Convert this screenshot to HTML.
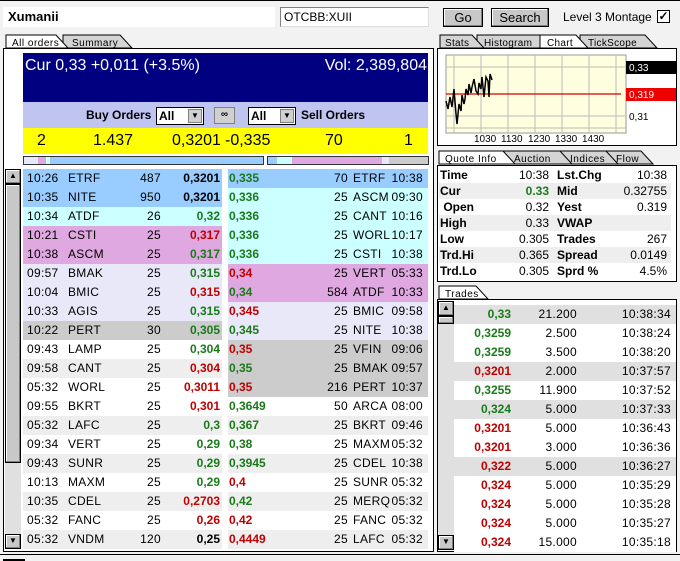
<!DOCTYPE html>
<html><head><meta charset="utf-8"><style>
*{margin:0;padding:0;box-sizing:border-box}
body{width:680px;height:561px;background:#f2f2f2;font-family:"Liberation Sans",Arial,sans-serif;position:relative;overflow:hidden;color:#000}
.a{position:absolute}
.r{position:absolute;height:19px;font-size:12px;line-height:19px;white-space:nowrap;letter-spacing:0.3px}
.r span{position:absolute}
.g{color:#1a7a1a;font-weight:bold;letter-spacing:0}
.d{color:#c00000;font-weight:bold;letter-spacing:0}
.k{color:#000;font-weight:bold;letter-spacing:0}
.btn{position:absolute;background:#c8c8c8;border:1px solid #000;box-shadow:inset -1px -1px #808080,inset 1px 1px #fff;font-size:13px;text-align:center;line-height:17px}
.q{position:absolute;left:439px;width:232px;height:16px;font-size:12px;line-height:16px}
.q span{position:absolute}
.q b{font-weight:bold}
svg text{font-family:"Liberation Sans",Arial,sans-serif}
</style></head><body>
<div class="a" style="left:0;top:0;width:680px;height:1px;background:#000"></div>
<div class="a" style="left:3px;top:7px;width:272px;height:20px;background:#fff;font-weight:bold;font-size:13px;line-height:20px;padding-left:5px">Xumanii</div>
<div class="a" style="left:280px;top:7px;width:149px;height:20px;background:#fff;border:1px solid #808080;border-right-color:#ddd;border-bottom-color:#ddd;font-size:12px;line-height:18px;padding-left:3px">OTCBB:XUII</div>
<div class="btn" style="left:443px;top:8px;width:40px;height:19px">Go</div>
<div class="btn" style="left:491px;top:8px;width:58px;height:19px">Search</div>
<div class="a" style="left:563px;top:8px;font-size:12px;line-height:18px">Level 3 Montage</div>
<div class="a" style="left:657px;top:10px;width:13px;height:13px;background:#fff;border:1px solid #000;font-size:12px;line-height:11px;text-align:center;font-weight:bold">✓</div>

<svg class="a" style="left:0;top:33px" width="440" height="16">
<polygon points="63,2 120,2 132,15 63,15" fill="#d4d4d4" stroke="#000"/>
<polygon points="6,2 56,2 68,15 6,15" fill="#fff" stroke="#000"/>
<text x="12" y="13" font-size="10" letter-spacing="0.5">All orders</text>
<text x="72" y="13" font-size="10" letter-spacing="0.5">Summary</text>
</svg>
<svg class="a" style="left:436px;top:33px" width="244" height="16">
<polygon points="144,2 209,2 221,15 144,15" fill="#d4d4d4" stroke="#000"/>
<polygon points="41,2 104,2 116,15 41,15" fill="#d4d4d4" stroke="#000"/>
<polygon points="4,2 36,2 48,15 4,15" fill="#d4d4d4" stroke="#000"/>
<polygon points="104,2 140,2 152,15 104,15" fill="#fff" stroke="#000"/>
<text x="9" y="13" font-size="10" letter-spacing="0.3">Stats</text>
<text x="48" y="13" font-size="10" letter-spacing="0.3">Histogram</text>
<text x="111" y="13" font-size="10" letter-spacing="0.3">Chart</text>
<text x="152" y="13" font-size="10" letter-spacing="0.3">TickScope</text>
</svg>

<div class="a" style="left:3px;top:48px;width:431px;height:504px;border:1px solid #000;background:#fff"></div>
<div class="a" style="left:23px;top:53px;width:405px;height:49px;background:#000080;color:#fff;font-size:16px;line-height:26px">
<span style="position:absolute;left:2px">Cur 0,33 +0,011 (+3.5%)</span><span style="position:absolute;right:1px">Vol: 2,389,804</span></div>
<div class="a" style="left:23px;top:102px;width:405px;height:26px;background:#c0c4f0;font-size:12px;font-weight:bold;line-height:26px">
<span style="position:absolute;left:63px">Buy Orders</span>
<div style="position:absolute;left:133px;top:5px;width:48px;height:18px;background:#fff;border:1px solid #000;font-size:12px;line-height:16px;padding-left:2px">All<div style="position:absolute;right:1px;top:1px;width:14px;height:14px;background:#d0d0d0;border:1px solid #808080;font-size:8px;line-height:12px;text-align:center">▼</div></div>
<div style="position:absolute;left:191px;top:5px;width:21px;height:17px;background:#d0d0d0;border:1px solid #808080;font-size:10px;line-height:14px;text-align:center">∞</div>
<div style="position:absolute;left:225px;top:5px;width:48px;height:18px;background:#fff;border:1px solid #000;font-size:12px;line-height:16px;padding-left:2px">All<div style="position:absolute;right:1px;top:1px;width:14px;height:14px;background:#d0d0d0;border:1px solid #808080;font-size:8px;line-height:12px;text-align:center">▼</div></div>
<span style="position:absolute;left:278px">Sell Orders</span></div>
<div class="a" style="left:23px;top:128px;width:405px;height:26px;background:#ffff00;font-size:16px;line-height:26px">
<span style="position:absolute;left:14px">2</span><span style="position:absolute;left:70px">1.437</span><span style="position:absolute;left:149px">0,3201</span><span style="position:absolute;left:202px">-0,335</span><span style="position:absolute;left:302px">70</span><span style="position:absolute;left:381px">1</span></div>
<div class="a" style="left:23px;top:156px;width:241px;height:9px;border:1px solid #333;background:#99ccff"><div style="position:absolute;left:0;width:14px;height:7px;background:#e8e8f8"></div><div style="position:absolute;left:14px;width:8px;height:7px;background:#e0a8e0"></div><div style="position:absolute;left:22px;width:4px;height:7px;background:#ccffff"></div></div>
<div class="a" style="left:267px;top:156px;width:162px;height:9px;border:1px solid #333;background:#e0a8e0"><div style="position:absolute;left:0;width:9px;height:7px;background:#99ccff"></div><div style="position:absolute;left:9px;width:15px;height:7px;background:#ccffff"></div><div style="position:absolute;left:114px;width:7px;height:7px;background:#e8e8f8"></div><div style="position:absolute;left:121px;width:39px;height:7px;background:#cccccc"></div></div>
<div class="a" style="left:5px;top:169px;width:16px;height:380px;background:#e0e0e0"></div>
<div class="btn" style="left:5px;top:169px;width:16px;height:15px;font-size:8px;line-height:12px">▲</div>
<div class="btn" style="left:5px;top:184px;width:16px;height:279px"></div>
<div class="btn" style="left:5px;top:534px;width:16px;height:15px;font-size:8px;line-height:12px">▼</div>

<div id="rows"></div>

<div class="a" style="left:437px;top:48px;width:240px;height:98px;border:1px solid #000;background:#fff"></div>
<svg class="a" style="left:438px;top:49px" width="238" height="96">
<rect x="8" y="6" width="180" height="78" fill="#ffffe0" stroke="#999"/>
<g stroke="#bbb" stroke-width="1">
<line x1="16" y1="6" x2="16" y2="84"/><line x1="43" y1="6" x2="43" y2="84"/><line x1="70" y1="6" x2="70" y2="84"/><line x1="97" y1="6" x2="97" y2="84"/><line x1="124" y1="6" x2="124" y2="84"/><line x1="151" y1="6" x2="151" y2="84"/><line x1="178" y1="6" x2="178" y2="84"/>
<line x1="8" y1="18" x2="188" y2="18"/><line x1="8" y1="67" x2="188" y2="67"/><line x1="8" y1="79" x2="188" y2="79"/>
</g>
<line x1="8" y1="45" x2="183" y2="45" stroke="#c00" stroke-width="1.2"/>
<polyline points="8,52 10,60 12,48 14,58 16,40 18,65 19,75 21,55 23,62 24,46 26,55 27,50 28,40 30,46 31,35 33,44 34,38 36,30 38,42 40,45 41,34 43,40 44,28 46,48 48,28 50,32 51,48 52,25 54,31" fill="none" stroke="#000" stroke-width="1.5"/>
<rect x="188" y="12" width="50" height="13" fill="#000"/><text x="191" y="22" font-size="10" fill="#fff">0,33</text>
<rect x="188" y="39" width="50" height="13" fill="#e00"/><text x="191" y="49" font-size="10" fill="#fff">0,319</text>
<text x="191" y="71" font-size="10">0,31</text>
<text x="36" y="93" font-size="10">1030</text><text x="63" y="93" font-size="10">1130</text><text x="90" y="93" font-size="10">1230</text><text x="117" y="93" font-size="10">1330</text><text x="144" y="93" font-size="10">1430</text>
</svg>

<svg class="a" style="left:436px;top:149px" width="244" height="16">
<polygon points="170,2 205,2 217,15 170,15" fill="#d4d4d4" stroke="#000"/>
<polygon points="124,2 170,2 182,15 124,15" fill="#d4d4d4" stroke="#000"/>
<polygon points="67,2 124,2 136,15 67,15" fill="#d4d4d4" stroke="#000"/>
<polygon points="3,2 67,2 79,15 3,15" fill="#fff" stroke="#000"/>
<text x="9" y="13" font-size="10" letter-spacing="0.5">Quote Info</text>
<text x="78" y="13" font-size="10" letter-spacing="0.5">Auction</text>
<text x="134" y="13" font-size="10" letter-spacing="0.5">Indices</text>
<text x="180" y="13" font-size="10" letter-spacing="0.5">Flow</text>
</svg>
<div class="a" style="left:437px;top:165px;width:240px;height:117px;border:1px solid #000;background:#fff"></div>
<div id="q"></div>

<svg class="a" style="left:436px;top:284px" width="100" height="16">
<polygon points="3,2 40,2 52,15 3,15" fill="#fff" stroke="#000"/>
<text x="9" y="13" font-size="10" letter-spacing="0.5">Trades</text>
</svg>
<div class="a" style="left:437px;top:299px;width:240px;height:253px;border:1px solid #000;background:#fff"></div>
<div class="a" style="left:438px;top:301px;width:16px;height:249px;background:#e0e0e0"></div>
<div class="btn" style="left:438px;top:301px;width:16px;height:15px;font-size:8px;line-height:12px">▲</div>
<div class="btn" style="left:438px;top:316px;width:16px;height:8px"></div>
<div class="btn" style="left:438px;top:535px;width:16px;height:15px;font-size:8px;line-height:12px">▼</div>
<div id="t"></div>

<div class="a" style="left:0;top:554px;width:680px;height:1px;background:#000"></div>
<div class="a" style="left:3px;top:559px;width:22px;height:2px;background:#000"></div>

<script>
var B="#99ccff",C="#ccffff",P="#e0a8e0",L="#e8e8f8",G="#cccccc",W="#ffffff",E="#eeeeee";
var buy=[["10:26","ETRF","487","0,3201","k",B],["10:35","NITE","950","0,3201","k",B],["10:34","ATDF","26","0,32","g",C],["10:21","CSTI","25","0,317","d",P],["10:38","ASCM","25","0,317","g",P],["09:57","BMAK","25","0,315","g",L],["10:04","BMIC","25","0,315","d",L],["10:33","AGIS","25","0,315","g",L],["10:22","PERT","30","0,305","g",G],["09:43","LAMP","25","0,304","g",W],["09:58","CANT","25","0,304","d",E],["05:32","WORL","25","0,3011","d",W],["09:55","BKRT","25","0,301","d",W],["05:32","LAFC","25","0,3","g",E],["09:34","VERT","25","0,29","g",W],["09:43","SUNR","25","0,29","g",E],["10:13","MAXM","25","0,29","g",W],["10:35","CDEL","25","0,2703","d",E],["05:32","FANC","25","0,26","d",W],["05:32","VNDM","120","0,25","k",E]];
var sell=[["0,335","g","70","ETRF","10:38",B],["0,336","g","25","ASCM","09:30",C],["0,336","g","25","CANT","10:16",C],["0,336","g","25","WORL","10:17",C],["0,336","g","25","CSTI","10:38",C],["0,34","d","25","VERT","05:33",P],["0,34","g","584","ATDF","10:33",P],["0,345","d","25","BMIC","09:58",L],["0,345","g","25","NITE","10:38",L],["0,35","d","25","VFIN","09:06",G],["0,35","g","25","BMAK","09:57",G],["0,35","d","216","PERT","10:37",G],["0,3649","g","50","ARCA","08:00",W],["0,367","g","25","BKRT","09:46",E],["0,38","g","25","MAXM","05:32",W],["0,3945","g","25","CDEL","10:38",E],["0,4","d","25","SUNR","05:32",W],["0,42","g","25","MERQ","05:32",E],["0,42","d","25","FANC","05:32",W],["0,4449","d","25","LAFC","05:32",E]];
var h="";
for(var i=0;i<20;i++){var y=169+i*19,b=buy[i],s=sell[i];
h+='<div class="r" style="left:23px;top:'+y+'px;width:199px;background:'+b[5]+'"><span style="left:4px">'+b[0]+'</span><span style="left:45px">'+b[1]+'</span><span style="right:61px">'+b[2]+'</span><span class="'+b[4]+'" style="right:2px">'+b[3]+'</span></div>';
h+='<div class="r" style="left:228px;top:'+y+'px;width:200px;background:'+s[5]+'"><span class="'+s[1]+'" style="left:1px">'+s[0]+'</span><span style="right:80px">'+s[2]+'</span><span style="left:125px">'+s[3]+'</span><span style="right:5px">'+s[4]+'</span></div>';}
document.getElementById("rows").innerHTML=h;
var q=[["Time","10:38","Lst.Chg","10:38",W],["Cur","0.33","Mid","0.32755",E],[" Open","0.32","Yest","0.319",W],["High","0.33","VWAP","",E],["Low","0.305","Trades","267",W],["Trd.Hi","0.365","Spread","0.0149",E],["Trd.Lo","0.305","Sprd %","4.5%",W]];
h="";for(i=0;i<7;i++){var r=q[i];h+='<div class="q" style="top:'+(167+i*16)+'px;background:'+r[4]+'"><span style="left:1px"><b>'+r[0].replace(" ","&nbsp;")+'</b></span><span style="right:122px'+(i==1?';color:#1a7a1a;font-weight:bold':'')+'">'+r[1]+'</span><span style="left:118px"><b>'+r[2]+'</b></span><span style="right:4px">'+r[3]+'</span></div>';}
document.getElementById("q").innerHTML=h;
var t=[["0,33","g","21.200","10:38:34",1],["0,3259","g","2.500","10:38:24",0],["0,3259","g","3.500","10:38:20",0],["0,3201","d","2.000","10:37:57",1],["0,3255","g","11.900","10:37:52",0],["0,324","g","5.000","10:37:33",1],["0,3201","d","5.000","10:36:43",0],["0,3201","d","3.000","10:36:36",0],["0,322","d","5.000","10:36:27",1],["0,324","d","5.000","10:35:29",0],["0,324","d","5.000","10:35:28",0],["0,324","d","5.000","10:35:27",0],["0,324","d","15.000","10:35:18",0]];
h="";for(i=0;i<13;i++){var r=t[i];h+='<div class="r" style="left:454px;top:'+(305+i*19)+'px;width:222px;background:'+(r[4]?"#e0e0e0":"#fff")+'"><span class="'+r[1]+'" style="right:165px">'+r[0]+'</span><span style="right:99px">'+r[2]+'</span><span style="right:5px">'+r[3]+'</span></div>';}
document.getElementById("t").innerHTML=h;
</script>
</body></html>
